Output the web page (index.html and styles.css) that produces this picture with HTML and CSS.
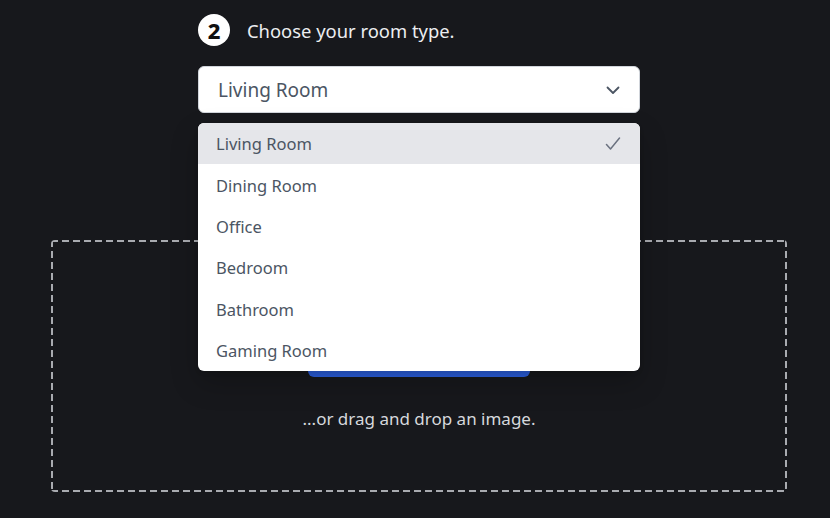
FILE: index.html
```html
<!DOCTYPE html>
<html lang="en">
<head>
<meta charset="utf-8">
<title>Choose room type</title>
<link rel="stylesheet" href="styles.css">
</head>
<body>
<main class="page">
  <section class="step">
    <div class="step-head">
      <span class="badge">2</span>
      <h2 class="step-title">Choose your room type.</h2>
    </div>
    <div class="select-wrap">
      <button class="select" type="button">
        <span>Living Room</span>
        <svg class="chev" width="14" height="10" viewBox="0 0 14 10" fill="none" stroke="#4b5563" stroke-width="1.8" stroke-linecap="round" stroke-linejoin="round"><path d="M1.5 2.5l5.5 5.5 5.5-5.5"/></svg>
      </button>
      <ul class="menu">
        <li class="opt active"><span>Living Room</span>
          <svg class="check" width="16" height="14" viewBox="0 0 16 14" fill="none" stroke="#6b7280" stroke-width="1.5" stroke-linecap="round" stroke-linejoin="round"><path d="M1.5 7.5l4 4.5 9-11"/></svg>
        </li>
        <li class="opt">Dining Room</li>
        <li class="opt">Office</li>
        <li class="opt">Bedroom</li>
        <li class="opt">Bathroom</li>
        <li class="opt">Gaming Room</li>
      </ul>
    </div>
  </section>
  <section class="drop">
    <button class="upload" type="button">Upload an image</button>
    <p class="drop-text">...or drag and drop an image.</p>
  </section>
</main>
</body>
</html>
```
FILE: styles.css
```css
* { box-sizing: border-box; }
html, body { margin: 0; padding: 0; }
body {
  background: #17181c;
  font-family: "Noto Sans", "Open Sans", sans-serif;
  color: #e5e7eb;
  width: 830px;
  height: 518px;
  overflow: hidden;
}
.page {
  padding-left: 51px;
  padding-top: 14px;
  width: 787px;
}
.step {
  width: 442px;
  margin-left: 147px;
}
.step-head {
  display: flex;
  align-items: center;
  gap: 17px;
  height: 32px;
}
.badge {
  width: 32px;
  height: 32px;
  border-radius: 50%;
  background: #ffffff;
  color: #111111;
  font-weight: 800;
  font-size: 22px;
  display: flex;
  align-items: center;
  justify-content: center;
  line-height: 1;
}
.step-title {
  margin: 0;
  font-size: 18.4px;
  font-weight: 400;
  color: #eceef1;
}
.select-wrap {
  position: relative;
  margin-top: 20px;
}
.select {
  width: 442px;
  height: 47px;
  border: 1px solid #d1d5db;
  border-radius: 6px;
  background: #ffffff;
  display: flex;
  align-items: center;
  justify-content: space-between;
  padding: 0 19px 0 19px;
  font-family: inherit;
  font-size: 19px;
  color: #4b5563;
}
.chev { margin-top: 1px; }
.menu {
  position: absolute;
  left: 0;
  top: 57px;
  width: 442px;
  margin: 0;
  padding: 0;
  list-style: none;
  background: #ffffff;
  border-radius: 6px;
  overflow: hidden;
  z-index: 5;
  box-shadow: 0 12px 28px rgba(0,0,0,0.22), 0 2px 4px rgba(0,0,0,0.1);
}
.opt {
  height: 41.4px;
  display: flex;
  align-items: center;
  justify-content: space-between;
  padding: 0 19px 0 18px;
  font-size: 16.5px;
  color: #4b5563;
}
.opt.active { background: #e5e6ea; }
.drop {
  margin-top: 127px;
  width: 736px;
  height: 252px;
  border-radius: 4px;
  background:
    repeating-linear-gradient(90deg, #a9abb0 0 7px, transparent 7px 11px) top left / 100% 2px no-repeat,
    repeating-linear-gradient(90deg, #a9abb0 0 7px, transparent 7px 11px) bottom left / 100% 2px no-repeat,
    repeating-linear-gradient(180deg, #a9abb0 0 7px, transparent 7px 11px) top left / 2px 100% no-repeat,
    repeating-linear-gradient(180deg, #a9abb0 0 7px, transparent 7px 11px) top right / 2px 100% no-repeat;
  display: flex;
  flex-direction: column;
  align-items: center;
  padding-top: 97px;
}
.upload {
  width: 222px;
  height: 40px;
  border: 0;
  border-radius: 6px;
  background: #2b5fe0;
  color: #ffffff;
  font-family: inherit;
  font-size: 16px;
}
.drop-text {
  margin: 30px 0 0;
  font-size: 17px;
  color: #d6d8dc;
}
```
